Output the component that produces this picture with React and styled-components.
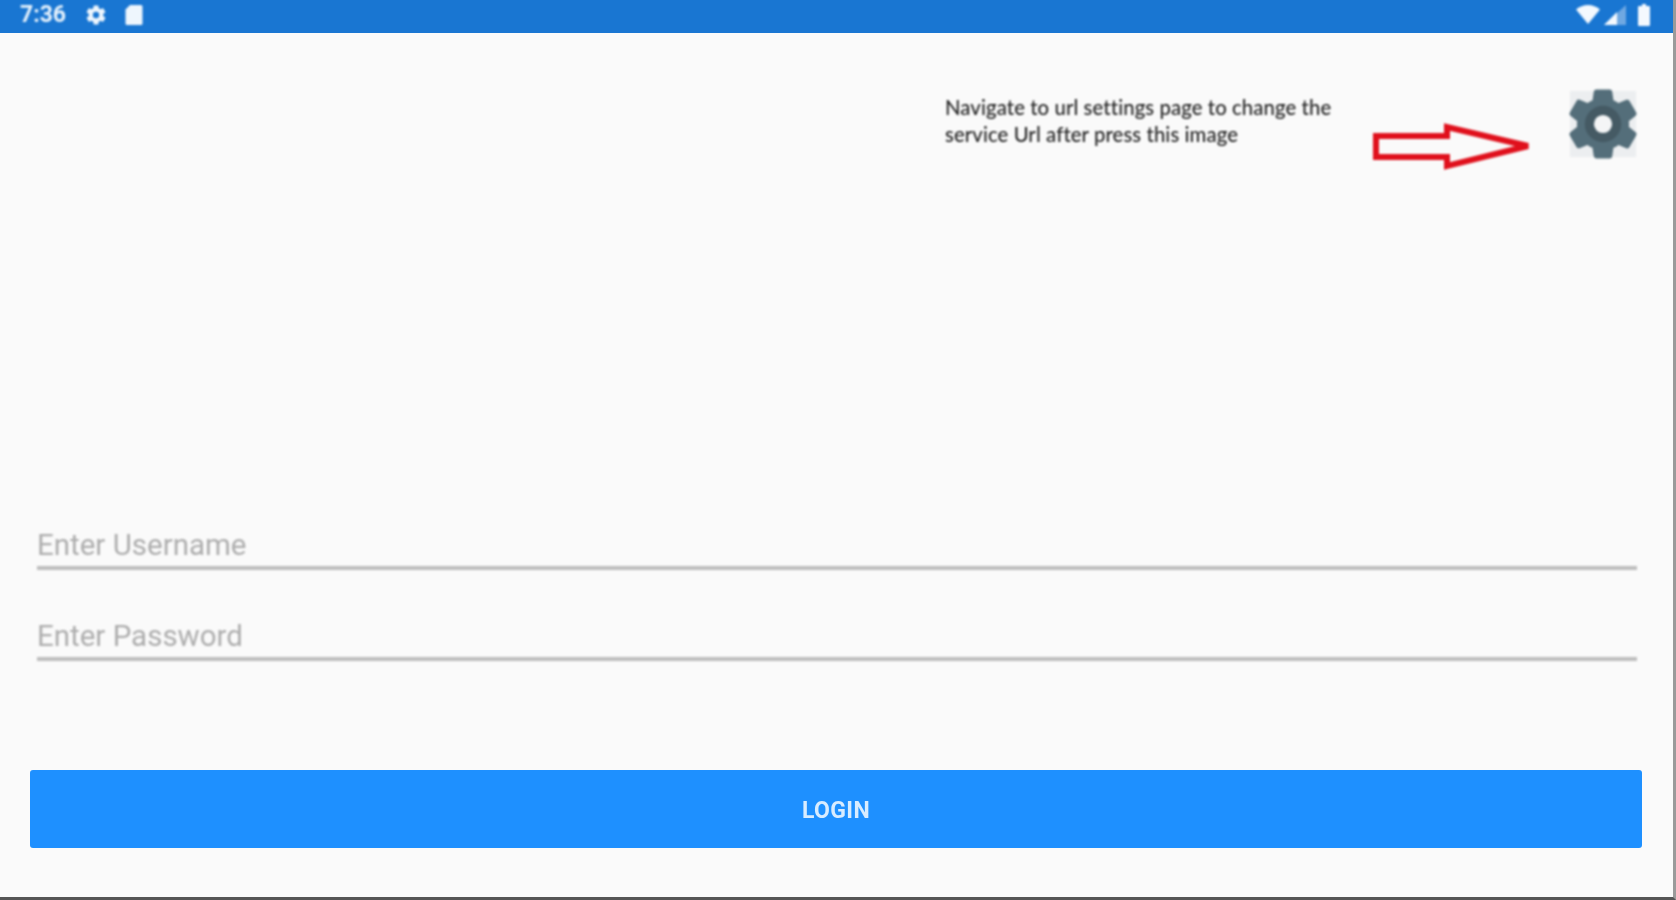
import React from "react";
import styled, { createGlobalStyle } from "styled-components";

const Global = createGlobalStyle`
  html, body { margin: 0; padding: 0; background: #fafafa; }
  body { font-family: Roboto, "Liberation Sans", sans-serif; overflow: hidden; }
`;

const Screen = styled.div`
  width: 1676px;
  height: 900px;
  box-sizing: border-box;
  display: flex;
  flex-direction: column;
  background: #fafafa;
  border-right: 3px solid #9a9a9a;
  border-bottom: 3px solid #555;
`;

const StatusBar = styled.header`
  flex: none;
  height: 33px;
  box-sizing: border-box;
  display: flex;
  align-items: center;
  justify-content: space-between;
  padding: 0 23px 4px 20px;
  background: #1976d2;
  color: #e6f2fc;
`;

const StatusGroup = styled.div`
  display: flex;
  align-items: center;
  gap: ${(p) => p.$gap}px;
  filter: blur(0.8px);
`;

const Time = styled.span`
  font-size: 23px;
  font-weight: 700;
  margin-right: 2px;
`;

const Main = styled.main`
  flex: 1;
  display: flex;
  flex-direction: column;
  padding: 56px 31px 49px 30px;
`;

const HintRow = styled.section`
  display: flex;
  justify-content: flex-end;
  align-items: flex-start;
  height: 72px;
  filter: blur(0.8px);
`;

const HintText = styled.p`
  margin: 5px 0 0;
  width: 398px;
  font-family: Lato, "Open Sans", sans-serif;
  font-size: 20.3px;
  font-weight: 500;
  line-height: 27px;
  color: #222;
  letter-spacing: 0.1px;
`;

const Arrow = styled.svg`
  display: block;
  margin: 33px 0 0 28px;
  overflow: visible;
`;

const GearBox = styled.div`
  width: 66px;
  height: 66px;
  margin: 2px 6px 0 41px;
  background: #eceef0;
  display: flex;
  align-items: center;
  justify-content: center;
`;

const Form = styled.form`
  margin-top: 355px;
  padding: 0 5px 0 7px;
  display: flex;
  flex-direction: column;
  gap: 37px;
  filter: blur(0.8px);
`;

const Field = styled.div`
  height: 54px;
  box-sizing: border-box;
  display: flex;
  align-items: center;
  border-bottom: 4px solid #bebebe;
  padding-top: 8px;
  font-size: 29.5px;
  color: #adadad;
`;

const LoginButton = styled.button`
  margin-top: auto;
  height: 78px;
  padding: 2px 0 0;
  border: none;
  border-radius: 3px;
  background: #1e90ff;
  color: #d8ecff;
  font-family: Roboto, sans-serif;
  font-size: 23px;
  font-weight: 700;
  letter-spacing: 0.4px;
  filter: blur(0.6px);
`;

const GEAR =
  "M19.14 12.94c.04-.3.06-.61.06-.94 0-.32-.02-.64-.07-.94l2.03-1.58c.18-.14.23-.41.12-.61l-1.92-3.32c-.12-.22-.37-.29-.59-.22l-2.39.96c-.5-.38-1.03-.7-1.62-.94l-.36-2.54c-.04-.24-.24-.41-.48-.41h-3.84c-.24 0-.43.17-.47.41l-.36 2.54c-.59.24-1.13.57-1.62.94l-2.39-.96c-.22-.08-.47 0-.59.22L2.74 8.87c-.12.21-.08.47.12.61l2.03 1.58c-.05.3-.09.63-.09.94s.02.64.07.94l-2.03 1.58c-.18.14-.23.41-.12.61l1.92 3.32c.12.22.37.29.59.22l2.39-.96c.5.38 1.03.7 1.62.94l.36 2.54c.05.24.24.41.48.41h3.84c.24 0 .44-.17.47-.41l.36-2.54c.59-.24 1.13-.56 1.62-.94l2.39.96c.22.08.47 0 .59-.22l1.92-3.32c.12-.22.07-.47-.12-.61l-2.01-1.58z";

export default function App() {
  return (
    <>
      <Global />
      <Screen>
        <StatusBar>
          <StatusGroup $gap={16}>
            <Time>7:36</Time>
            <svg width="24" height="24" viewBox="0 0 24 24">
              <path d={GEAR} fill="#eef6fd" />
              <circle cx="12" cy="12" r="3.2" fill="#1976d2" />
            </svg>
            <svg width="20" height="22" viewBox="0 0 20 22">
              <path d="M6 1h11a1.500 1.500 0 0 1 1.500 1.500v17a1.500 1.500 0 0 1-1.500 1.500H3a1.500 1.500 0 0 1-1.500-1.500V5.500z" fill="#eef6fd" />
            </svg>
          </StatusGroup>
          <StatusGroup $gap={4}>
            <svg width="24" height="19" viewBox="0 0 24 19">
              <path d="M0 4.500C3.500 1.500 7.500 0 12 0s8.500 1.500 12 4.500L12 19z" fill="#f4f9fe" />
            </svg>
            <svg width="22" height="20" viewBox="0 0 22 20" style={{ marginRight: 8 }}>
              <path d="M22 0v20H0z" fill="#6fa8e2" />
              <path d="M13 8v12H0l13-13z" fill="#f4f9fe" />
            </svg>
            <svg width="12" height="22" viewBox="0 0 12 22">
              <path d="M4 0h4v2h3a1 1 0 0 1 1 1v18a1 1 0 0 1-1 1H1a1 1 0 0 1-1-1V3a1 1 0 0 1 1-1h3z" fill="#f4f9fe" />
            </svg>
          </StatusGroup>
        </StatusBar>
        <Main>
          <HintRow>
            <HintText>
              Navigate to url settings page to change the
              <br />
              service Url after press this image
            </HintText>
            <Arrow width="158" height="48" viewBox="0 0 158 48">
              <path
                d="M5 14H76V5L157 24 76 44V35H5z"
                fill="#fafafa"
                stroke="#e0101c"
                strokeWidth="6"
              />
            </Arrow>
            <GearBox>
              <svg width="84" height="84" viewBox="0 0 24 24" style={{ flex: "none" }}>
                <path d={GEAR} fill="#546e7a" stroke="#546e7a" strokeWidth="0.5" />
                <circle cx="12" cy="12" r="5.200" fill="#455a64" />
                <circle cx="12" cy="12" r="2.600" fill="#f4f5f6" />
              </svg>
            </GearBox>
          </HintRow>
          <Form>
            <Field>Enter Username</Field>
            <Field>Enter Password</Field>
          </Form>
          <LoginButton type="button">LOGIN</LoginButton>
        </Main>
      </Screen>
    </>
  );
}
